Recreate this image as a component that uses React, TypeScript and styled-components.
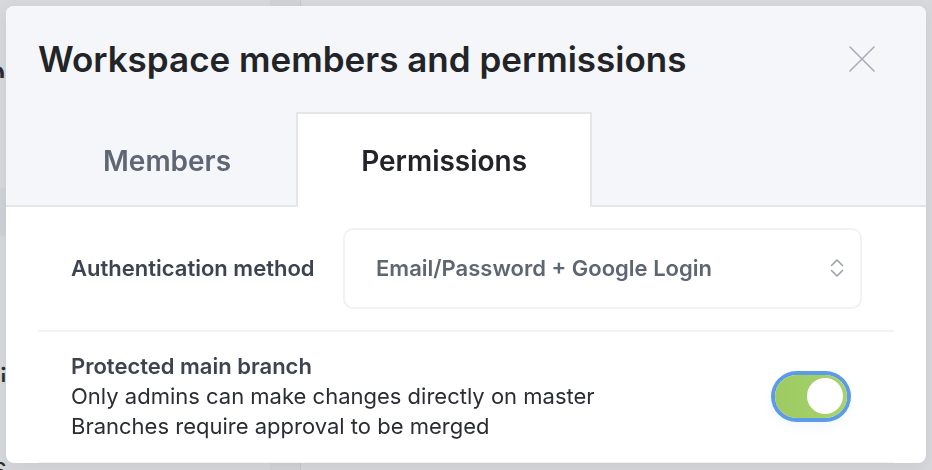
import React, { useState, type FC } from 'react'
import styled, { createGlobalStyle } from 'styled-components'

const GlobalStyle = createGlobalStyle`
  html, body {
    margin: 0;
    padding: 0;
    height: 100%;
  }
  body {
    font-family: Inter, 'Noto Sans', sans-serif;
    background: #d7d8db;
    overflow: hidden;
  }
  #root {
    height: 100%;
  }
`

const Page = styled.div`
  display: flex;
  height: 100%;
  background: #d7d8db;
`

const Sidebar = styled.div`
  width: 270px;
  display: flex;
  flex-direction: column;
`

const SidebarLine = styled.div<{ $top: number; $size: number }>`
  display: flex;
  justify-content: flex-end;
  width: 7px;
  overflow: hidden;
  white-space: nowrap;
  margin-top: ${({ $top }) => $top}px;
  font-size: ${({ $size }) => $size}px;
  line-height: 1;
  color: #2a2c30;
`

const SidebarBand = styled.div`
  height: 82px;
  margin-top: 110px;
  background: #cfd2d6;
`

const Gutter = styled.div`
  width: 30px;
  background: #d1d2d5;
  border-right: 1px solid #c8c9cc;
`

const Main = styled.div`
  flex: 1;
  padding-left: 304px;
`

const OlderLink = styled.a`
  display: block;
  margin-top: 2px;
  font-size: 25px;
  line-height: 30px;
  color: #5b8ed6;
  text-decoration: none;
`

const Overlay = styled.div`
  position: fixed;
  inset: 0;
  padding: 6px;
`

const Modal = styled.div`
  width: 920px;
  height: 457px;
  background: #ffffff;
  border-radius: 8px;
  overflow: hidden;
  box-shadow: 0 4px 16px rgba(0, 0, 0, 0.06);
`

const Header = styled.div`
  background: #f5f6fa;
  padding: 0 32px;
  border-bottom: 2px solid #e4e6ea;
`

const TitleRow = styled.div`
  display: flex;
  align-items: center;
  justify-content: space-between;
  padding-top: 31px;
`

const Title = styled.h2`
  margin: 0;
  font-size: 35px;
  line-height: 44px;
  font-weight: 600;
  color: #222428;
`

const CloseButton = styled.button`
  display: flex;
  align-items: center;
  justify-content: center;
  width: 40px;
  height: 40px;
  margin-right: 12px;
  padding: 0;
  border: none;
  background: none;
  color: #a8aeb8;
  cursor: pointer;
`

const Tabs = styled.div`
  display: flex;
  align-items: flex-end;
  margin-top: 31px;
`

const Tab = styled.button<{ $active: boolean }>`
  height: 95px;
  margin-bottom: -2px;
  padding: 0 63px;
  border: 2px solid ${({ $active }) => ($active ? '#e4e6ea' : 'transparent')};
  border-bottom: none;
  background: ${({ $active }) => ($active ? '#ffffff' : 'transparent')};
  font-family: inherit;
  font-size: 28px;
  font-weight: 600;
  color: ${({ $active }) => ($active ? '#222428' : '#5f6775')};
  cursor: pointer;
`

const Body = styled.div`
  padding: 0 32px;
`

const FieldRow = styled.div`
  display: grid;
  grid-template-columns: 272px 1fr;
  align-items: center;
  padding: 21px 32px 21px 33px;
  border-bottom: 2px solid #f2f3f7;
`

const Label = styled.label`
  font-size: 22px;
  line-height: 28px;
  font-weight: 600;
  color: #3d4350;
  margin-bottom: 2px;
`

const Select = styled.div`
  display: flex;
  align-items: center;
  justify-content: space-between;
  height: 75px;
  padding: 0 16px 2px 31px;
  border: 2px solid #f1f2f6;
  border-radius: 10px;
  font-size: 22px;
  font-weight: 600;
  color: #5e6673;
`

const ToggleRow = styled.div`
  display: flex;
  align-items: center;
  justify-content: space-between;
  padding: 19px 47px 21px 33px;
  border-bottom: 2px solid #f2f3f7;
`

const SettingText = styled.div`
  font-size: 22px;
  line-height: 30px;
  color: #2a2d33;
`

const SettingTitle = styled.div`
  font-weight: 600;
  color: #3d4350;
`

const Track = styled.button<{ $on: boolean }>`
  display: flex;
  align-items: center;
  justify-content: ${({ $on }) => ($on ? 'flex-end' : 'flex-start')};
  width: 72px;
  height: 43px;
  padding: 0 4px;
  border: none;
  border-radius: 22px;
  background: ${({ $on }) => ($on ? 'linear-gradient(90deg, #9dcb62, #a6d36c)' : '#d9dce1')};
  box-shadow: 0 0 0 4px #5d9be8, 0 6px 14px rgba(93, 155, 232, 0.12);
  cursor: pointer;
`

const Knob = styled.span`
  width: 36px;
  height: 36px;
  border-radius: 50%;
  background: #ffffff;
`

const CloseIcon: FC = () => (
  <svg width='26' height='26' viewBox='0 0 26 26' fill='none' stroke='currentColor' strokeWidth='1.6' strokeLinecap='round'>
    <path d='M1 1 L25 25 M25 1 L1 25' />
  </svg>
)

const UpDownIcon: FC = () => (
  <svg width='14' height='20' viewBox='0 0 14 20' fill='none' stroke='#9aa1ad' strokeWidth='1.6' strokeLinecap='round' strokeLinejoin='round'>
    <path d='M1.5 7.5 L7 2 L12.5 7.5' />
    <path d='M1.5 12.5 L7 18 L12.5 12.5' />
  </svg>
)

const App: FC = () => {
  const [tab, setTab] = useState('permissions')
  const [protectedBranch, setProtectedBranch] = useState(true)

  return (
    <>
      <GlobalStyle />
      <Page>
        <Sidebar>
          <SidebarLine $top={54} $size={40}>Design</SidebarLine>
          <SidebarBand />
          <SidebarLine $top={128} $size={30}>Api</SidebarLine>
          <SidebarLine $top={72} $size={28}>Docs</SidebarLine>
        </Sidebar>
        <Gutter />
        <Main>
          <OlderLink href='#'>Load older activity</OlderLink>
        </Main>
      </Page>

      <Overlay>
        <Modal>
          <Header>
            <TitleRow>
              <Title>Workspace members and permissions</Title>
              <CloseButton aria-label='Close'>
                <CloseIcon />
              </CloseButton>
            </TitleRow>
            <Tabs>
              <Tab $active={tab === 'members'} onClick={() => setTab('members')}>
                Members
              </Tab>
              <Tab $active={tab === 'permissions'} onClick={() => setTab('permissions')}>
                Permissions
              </Tab>
            </Tabs>
          </Header>

          <Body>
            <FieldRow>
              <Label>Authentication method</Label>
              <Select>
                <span>Email/Password + Google Login</span>
                <UpDownIcon />
              </Select>
            </FieldRow>

            <ToggleRow>
              <SettingText>
                <SettingTitle>Protected main branch</SettingTitle>
                <div>Only admins can make changes directly on master</div>
                <div>Branches require approval to be merged</div>
              </SettingText>
              <Track $on={protectedBranch} onClick={() => setProtectedBranch(!protectedBranch)}>
                <Knob />
              </Track>
            </ToggleRow>
          </Body>
        </Modal>
      </Overlay>
    </>
  )
}

export default App
